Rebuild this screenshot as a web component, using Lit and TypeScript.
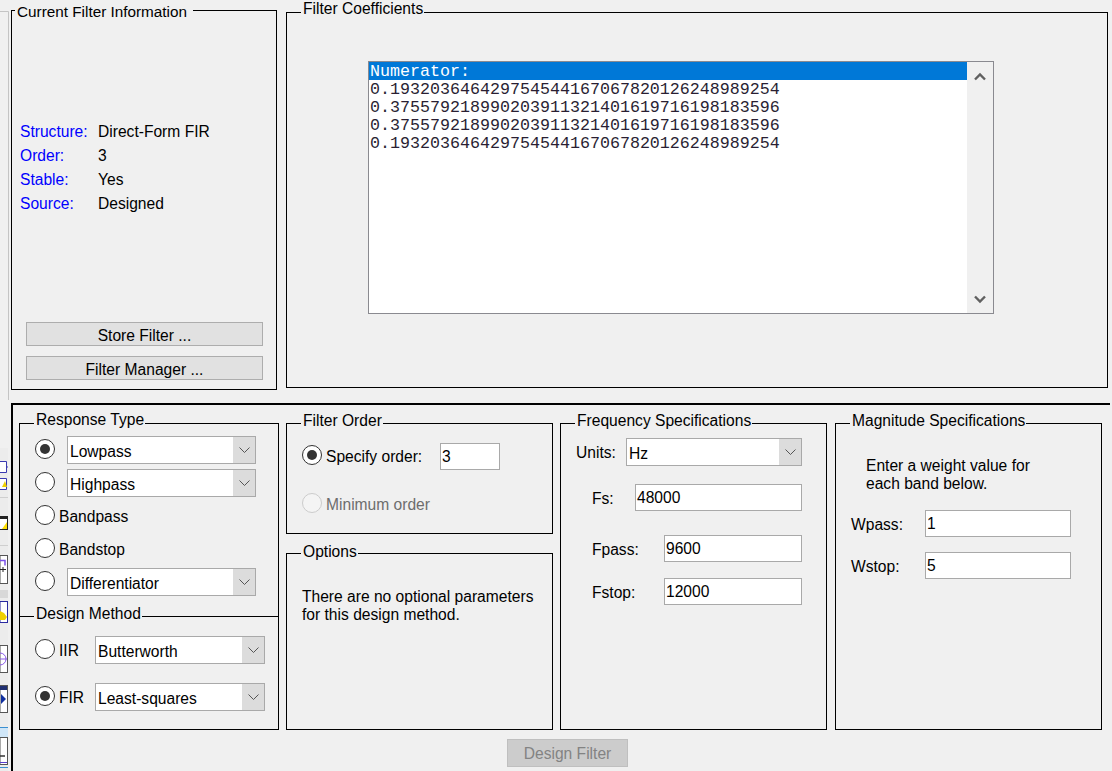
import { LitElement, css, html } from 'lit';
import { customElement } from 'lit/decorators.js';

const chevron = html`<svg width="11" height="6" viewBox="0 0 11 6"><path d="M.5.5l5 5 5-5" fill="none" stroke="#555" stroke-width="1"/></svg>`;

const numerator = [
  '0.193203646429754544167067820126248989254',
  '0.375579218990203911321401619716198183596',
  '0.375579218990203911321401619716198183596',
  '0.193203646429754544167067820126248989254',
];

@customElement('app-root')
export class AppRoot extends LitElement {
  static styles = css`
    :host {
      display: block;
      width: 1112px;
      height: 771px;
      overflow: hidden;
      background: #f0f0f0;
      color: #000;
      font-family: "Liberation Sans", Arial, sans-serif;
      font-size: 15.6px;
      line-height: 18px;
    }
    .app { display: grid; grid-template-columns: 11px 1fr; height: 771px; }
    .strip { display: block; }
    .main { display: flex; flex-direction: column; min-width: 0; }

    .top { display: flex; height: 403px; gap: 9px; align-items: flex-start; }
    .group { position: relative; border: 1px solid #000; box-sizing: border-box; }
    .legend {
      position: absolute;
      top: -12px;
      left: 14px;
      padding: 0 1px 0 2px;
      background: #f0f0f0;
      white-space: nowrap;
    }

    .info {
      width: 266px;
      height: 380px;
      margin-top: 10px;
      display: flex;
      flex-direction: column;
      padding: 0 13px 9px 8px;
    }
    .info .legend { left: 3px; top: -8px; padding-right: 6px; font-size: 15.3px; }
    .props {
      display: grid;
      grid-template-columns: 78px 1fr;
      grid-auto-rows: 24px;
      align-items: center;
      margin-top: 109px;
    }
    .props .key { color: #0000ff; }
    .store { margin-top: auto; display: flex; flex-direction: column; gap: 10px; padding-left: 6px; }
    .btn {
      height: 24px;
      border: 1px solid #adadad;
      background: #e1e1e1;
      text-align: center;
      line-height: 25px;
      box-sizing: border-box;
    }

    .coef {
      width: 822px;
      height: 376px;
      margin-top: 12px;
      padding: 48px 0 0 81px;
    }
    .coef .legend { top: -13px; left: 14px; }
    .list {
      width: 626px;
      height: 253px;
      box-sizing: border-box;
      border: 1px solid #8a8a90;
      background: #fff;
      display: flex;
      font-family: "Liberation Mono", "Courier New", monospace;
      font-size: 16.67px;
      color: #2a1f33;
    }
    .lines { flex: 1; min-width: 0; }
    .line { height: 18px; padding-left: 1px; line-height: 20px; white-space: pre; }
    .line.sel { background: #0078d7; color: #fff; }
    .scroll {
      width: 26px;
      background: #f0f0f0;
      display: flex;
      flex-direction: column;
      justify-content: space-between;
      align-items: center;
      padding: 10px 0 9px;
      box-sizing: border-box;
    }
    .scroll svg { display: block; }

    .frame {
      width: 1099px;
      flex: 1;
      box-sizing: border-box;
      border-top: 2px solid #000;
      border-left: 2px solid #000;
      padding: 18px 0 0 6px;
    }
    .columns { display: flex; height: 307px; }
    .col1 { width: 260px; display: flex; flex-direction: column; }
    .col2 { width: 267px; margin-left: 7px; display: flex; flex-direction: column; gap: 19px; }
    .col3 { width: 267px; margin-left: 7px; }
    .col4 { width: 267px; margin-left: 8px; }

    .response { height: 192px; box-sizing: border-box; padding: 12px 0 0 15px; display: flex; flex-direction: column; gap: 5px; }
    .response .legend { top: -13px; }
    .method { position: relative; flex: 1; padding: 19px 0 0 15px; border-top: 1px solid #000; display: flex; flex-direction: column; gap: 19px; }

    .row { display: flex; align-items: center; height: 28px; }
    .radio {
      width: 20px;
      height: 20px;
      box-sizing: border-box;
      border: 1px solid #333;
      border-radius: 50%;
      background: #fff;
      display: flex;
      align-items: center;
      justify-content: center;
      flex: none;
      margin-top: -2px;
    }
    .radio.on::after { content: ""; width: 10px; height: 10px; border-radius: 50%; background: #333; }
    .radio.off { border-color: #ccc; background: #f4f4f4; }
    .rlabel { margin-left: 4px; padding-top: 2px; }
    .muted { color: #6d6d6d; }

    .select {
      height: 28px;
      box-sizing: border-box;
      border: 1px solid #a9a9a9;
      background: #fff;
      display: flex;
      align-items: center;
    }
    .select .val { flex: 1; padding: 4px 0 0 2px; }
    .select .arrow {
      width: 22px;
      height: 100%;
      background: #dcdcdc;
      display: flex;
      align-items: center;
      justify-content: center;
    }
    .s-resp { width: 189px; margin-left: 12px; }
    .s-meth { width: 170px; }
    .s-unit { width: 176px; }
    .iir { width: 60px; display: flex; align-items: center; flex: none; }

    .order { height: 111px; padding: 18px 0 0 15px; }
    .field {
      height: 27px;
      box-sizing: border-box;
      border: 1px solid #a9a9a9;
      background: #fff;
      padding-left: 1px;
      line-height: 26px;
    }
    .order-label { width: 114px; flex: none; }
    .f-order { width: 60px; }
    .min { margin-top: 20px; }
    .options { flex: 1; padding: 34px 0 0 15px; }
    .options .legend { top: -11px; }

    .freq { height: 100%; padding: 14px 0 0 15px; }
    .units { width: 50px; flex: none; padding-top: 2px; }
    .fs { display: flex; align-items: center; height: 27px; }
    .lab { padding: 3px 0 0 16px; box-sizing: border-box; flex: none; }
    .lab-fs { width: 59px; }
    .lab-pass { width: 88px; }
    .f-fs { width: 167px; }
    .f-pass { width: 138px; }
    .gap-fs { margin-top: 18px; }
    .gap-pass { margin-top: 24px; }
    .gap-stop { margin-top: 16px; }

    .mag { height: 100%; padding: 33px 0 0 15px; }
    .mag p { margin: 0 0 0 15px; }
    .wrow { display: flex; align-items: center; height: 27px; margin-top: 15px; }
    .wrow.first { margin-top: 17px; }
    .wlab { width: 74px; flex: none; padding-top: 2px; }
    .f-w { width: 146px; }

    .design {
      width: 121px;
      height: 28px;
      margin: 9px 0 0 488px;
      box-sizing: border-box;
      border: 1px solid #bfbfbf;
      background: #cccccc;
      color: #838383;
      text-align: center;
      line-height: 28px;
    }
  `;

  private _radio(on = false, off = false) {
    return html`<span class="radio ${on ? 'on' : ''} ${off ? 'off' : ''}"></span>`;
  }

  private _select(value: string, cls: string) {
    return html`<div class="select ${cls}"><span class="val">${value}</span><span class="arrow">${chevron}</span></div>`;
  }

  private _strip() {
    return html`<svg class="strip" width="11" height="771" viewBox="0 0 11 771">
      <path d="M0 11.5h8.5V400" fill="none" stroke="#c4c4c4"/>
      <rect x="0" y="448" width="8" height="323" fill="#ececec"/>
      <path d="M0 461.5h6.5v11H0M6.5 467H8M0 478.5h6.5v11H0" fill="#fff" stroke="#3a3ab0"/>
      <path d="M2 487l3-6 2 6z" fill="#f0d000"/>
      <path d="M0 497.5h8M0 545.5h8" stroke="#cfcfcf"/>
      <path d="M0 516h8v14H0z" fill="#222"/>
      <path d="M0 519h7v10H0z" fill="#fff"/>
      <path d="M2 529l5-7v7z" fill="#ffe000"/>
      <rect x="0" y="555.5" width="7.5" height="28" fill="#fff" stroke="#555"/>
      <path d="M0 560.5h5v5" fill="none" stroke="#7a50e8" stroke-width="1.5"/>
      <path d="M0 569.5h6M3 567v5" stroke="#222"/>
      <rect x="0" y="590" width="8" height="8" fill="#d8d8d8"/>
      <rect x="0" y="601.5" width="7.5" height="21" fill="#fff" stroke="#2a2aa0"/>
      <path d="M0 611l4 2 3 4-2 3H0z" fill="#f0d000"/>
      <rect x="0" y="645.5" width="7.5" height="27" fill="#fff" stroke="#555"/>
      <circle cx="0" cy="659" r="6" fill="none" stroke="#8a5ae8"/>
      <path d="M0 659h7" stroke="#8a5ae8"/>
      <rect x="0" y="685.5" width="7.5" height="27" fill="#fff" stroke="#555"/>
      <rect x="0" y="686" width="7" height="4" fill="#1f2f70"/>
      <path d="M1 694l5 5-5 5z" fill="#1030a0"/>
      <rect x="0" y="727" width="8" height="1" fill="#3b8fd0"/>
      <rect x="0" y="728" width="8" height="9" fill="#cfe6f8"/>
      <rect x="0" y="737.5" width="7.5" height="27" fill="#fff" stroke="#555"/>
      <path d="M0 756h5" stroke="#333" stroke-width="1.5"/>
      <path d="M0 762.5h7" stroke="#5a40d0"/>
      <path d="M0 767.5h8" stroke="#3b8fd0"/>
    </svg>`;
  }

  render() {
    return html`
      <div class="app">
        ${this._strip()}
        <div class="main">
          <div class="top">
            <section class="group info">
              <span class="legend">Current Filter Information</span>
              <div class="props">
                <span class="key">Structure:</span><span>Direct-Form FIR</span>
                <span class="key">Order:</span><span>3</span>
                <span class="key">Stable:</span><span>Yes</span>
                <span class="key">Source:</span><span>Designed</span>
              </div>
              <div class="store">
                <div class="btn">Store Filter ...</div>
                <div class="btn">Filter Manager ...</div>
              </div>
            </section>
            <section class="group coef">
              <span class="legend">Filter Coefficients</span>
              <div class="list">
                <div class="lines">
                  <div class="line sel">Numerator:</div>
                  ${numerator.map((n) => html`<div class="line">${n}</div>`)}
                </div>
                <div class="scroll">
                  <svg width="12" height="9" viewBox="0 0 12 9"><path d="M1 7.5l5-5 5 5" fill="none" stroke="#606060" stroke-width="2.4"/></svg>
                  <svg width="12" height="9" viewBox="0 0 12 9"><path d="M1 1.5l5 5 5-5" fill="none" stroke="#606060" stroke-width="2.4"/></svg>
                </div>
              </div>
            </section>
          </div>

          <div class="frame">
            <div class="columns">
              <div class="col1 group">
                <div class="response">
                  <span class="legend">Response Type</span>
                  <div class="row">${this._radio(true)}${this._select('Lowpass', 's-resp')}</div>
                  <div class="row">${this._radio()}${this._select('Highpass', 's-resp')}</div>
                  <div class="row">${this._radio()}<span class="rlabel">Bandpass</span></div>
                  <div class="row">${this._radio()}<span class="rlabel">Bandstop</span></div>
                  <div class="row">${this._radio()}${this._select('Differentiator', 's-resp')}</div>
                </div>
                <div class="method">
                  <span class="legend">Design Method</span>
                  <div class="row"><span class="iir">${this._radio()}<span class="rlabel">IIR</span></span>${this._select('Butterworth', 's-meth')}</div>
                  <div class="row"><span class="iir">${this._radio(true)}<span class="rlabel">FIR</span></span>${this._select('Least-squares', 's-meth')}</div>
                </div>
              </div>

              <div class="col2">
                <section class="group order">
                  <span class="legend">Filter Order</span>
                  <div class="row">${this._radio(true)}<span class="rlabel order-label">Specify order:</span><div class="field f-order">3</div></div>
                  <div class="row min">${this._radio(false, true)}<span class="rlabel muted">Minimum order</span></div>
                </section>
                <section class="group options">
                  <span class="legend">Options</span>
                  There are no optional parameters<br />for this design method.
                </section>
              </div>

              <div class="col3">
                <section class="group freq">
                  <span class="legend">Frequency Specifications</span>
                  <div class="row"><span class="units">Units:</span>${this._select('Hz', 's-unit')}</div>
                  <div class="fs gap-fs"><span class="lab lab-fs">Fs:</span><div class="field f-fs">48000</div></div>
                  <div class="fs gap-pass"><span class="lab lab-pass">Fpass:</span><div class="field f-pass">9600</div></div>
                  <div class="fs gap-stop"><span class="lab lab-pass">Fstop:</span><div class="field f-pass">12000</div></div>
                </section>
              </div>

              <div class="col4">
                <section class="group mag">
                  <span class="legend">Magnitude Specifications</span>
                  <p>Enter a weight value for<br />each band below.</p>
                  <div class="wrow first"><span class="wlab">Wpass:</span><div class="field f-w">1</div></div>
                  <div class="wrow"><span class="wlab">Wstop:</span><div class="field f-w">5</div></div>
                </section>
              </div>
            </div>
            <div class="design">Design Filter</div>
          </div>
        </div>
      </div>
    `;
  }
}
